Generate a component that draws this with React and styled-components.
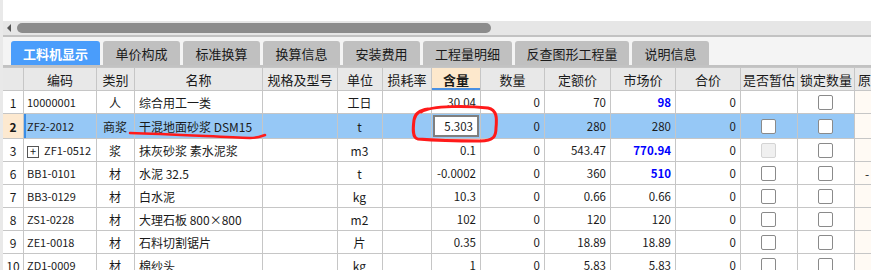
import React from "react"
import styled, { createGlobalStyle } from "styled-components"

const GlobalStyle = createGlobalStyle`
  html, body {
    margin: 0;
    padding: 0;
    background: #ffffff;
    overflow: hidden;
  }
  body {
    font-family: "Noto Sans CJK SC", "Noto Sans", sans-serif;
    color: #1a1a1a;
  }
`

//  styled-components
const Page = styled.div`
  position: relative;
  width: 871px;
  height: 270px;
  overflow: hidden;
  border-left: 3px solid #e9e9e9;
  box-sizing: border-box;
  background: #ffffff;
`

const Blank = styled.div`
  height: 21px;
`

const ScrollTrack = styled.div`
  display: flex;
  align-items: center;
  height: 14px;
  background: #e6e6e6;
  border-bottom: 2px solid #c2c2c2;
  padding-left: 4px;
  gap: 6px;
`

const Arrow = styled.div`
  width: 0;
  height: 0;
  border-top: 4px solid transparent;
  border-bottom: 4px solid transparent;
  border-right: 4px solid #555555;
`

const Thumb = styled.div`
  width: 474px;
  height: 10px;
  border-radius: 5px;
  background: #8c8c8c;
`

const TabBar = styled.div`
  display: flex;
  gap: 3px;
  height: 30px;
  padding: 6px 0 0 8px;
  box-sizing: border-box;
  background: #f4f4f4;
  border-bottom: 2px solid #c2c2c2;
  align-items: flex-end;
`

const Tab = styled.div`
  width: ${props => props.$w}px;
  height: 24px;
  display: flex;
  align-items: center;
  justify-content: center;
  border-radius: 3px 3px 0 0;
  font-size: 13px;
  background: ${props => (props.$active ? "#4a9dfb" : "#c0c0c0")};
  color: ${props => (props.$active ? "#ffffff" : "#1a1a1a")};
  font-weight: ${props => (props.$active ? "bold" : "normal")};
`

const Grid = styled.table`
  border-collapse: collapse;
  table-layout: fixed;
  width: 892px;
  margin-left: -1px;
`

const Head = styled.th`
  height: 22px;
  padding: 0;
  border: 1px solid #c6c6c6;
  background: ${props => (props.$active ? "#fde8cc" : "#e8e8e8")};
  font-size: 13px;
  font-weight: ${props => (props.$active ? "bold" : "normal")};
  text-align: ${props => props.$align || "center"};
  padding-left: ${props => (props.$align === "left" ? "3px" : "0")};
  white-space: nowrap;
  overflow: hidden;
  box-shadow: ${props => (props.$active ? "inset 0 -2px 0 #4a90e2" : "none")};
`

const Row = styled.tr`
  background: ${props => (props.$selected ? "#96c8f6" : "#ffffff")};
`

const Cell = styled.td`
  height: 22px;
  padding: 0 ${props => props.$pr || 4}px 0 ${props => props.$pl || 3}px;
  border: 1px solid #c6c6c6;
  font-size: ${props => (props.$num ? "11.5px" : "12px")};
  text-align: ${props => props.$align || "left"};
  white-space: nowrap;
  overflow: hidden;
  color: ${props => (props.$blue ? "#0000ff" : "#1a1a1a")};
  font-weight: ${props => (props.$blue ? "bold" : "normal")};
`

const NumCell = styled(Cell)`
  text-align: center;
  padding: 0;
  background: ${props => (props.$selected ? "#fde9d0" : "transparent")};
  font-weight: ${props => (props.$selected ? "bold" : "normal")};
  font-size: 12px;
`

const CodeCell = styled(Cell)`
  font-size: 11px;
  box-shadow: ${props => (props.$selected ? "inset 2px 0 0 #3a8ee6" : "none")};
`

const TailCell = styled(Cell)`
  background: #fffaf4;
  padding-left: 10px;
`

const EditCell = styled(Cell)`
  padding: 1px;
`

const EditBox = styled.div`
  height: 18px;
  border: 2px solid #7f7f7f;
  background: #ffffff;
  text-align: right;
  padding-right: 4px;
  line-height: 18px;
`

const Check = styled.div`
  width: 13px;
  height: 13px;
  margin: 0 auto;
  border-radius: 2px;
  border: 1px solid ${props => (props.$disabled ? "#d4d4d4" : "#8a8a8a")};
  background: ${props => (props.$disabled ? "#f0f0f0" : "#ffffff")};
`

const Expander = styled.span`
  display: inline-flex;
  align-items: center;
  justify-content: center;
  width: 10px;
  height: 10px;
  border: 1px solid #555555;
  font-size: 11px;
  line-height: 1;
  margin-right: 5px;
  vertical-align: -1px;
`

const Marks = styled.svg`
  position: absolute;
  left: -3px;
  top: 0;
  pointer-events: none;
`

const tabs = [
  ["工料机显示", 89, true],
  ["单价构成", 77],
  ["标准换算", 77],
  ["换算信息", 77],
  ["安装费用", 77],
  ["工程量明细", 89],
  ["反查图形工程量", 114],
  ["说明信息", 77],
]

const cols = [21, 73, 38, 128, 75, 45, 49, 49, 64, 66, 65, 65, 57, 57, 40]
const heads = ["", "编码", "类别", "名称", "规格及型号", "单位", "损耗率", "含量", "数量", "定额价", "市场价", "合价", "是否暂估", "锁定数量", "原"]

const rows = [
  { no: "1", code: "10000001", type: "人", name: "综合用工一类", unit: "工日", qty: "30.04", price: "70", market: "98", blue: true, est: null, lock: "on" },
  { no: "2", code: "ZF2-2012", type: "商浆", name: "干混地面砂浆 DSM15", unit: "t", qty: "5.303", price: "280", market: "280", est: "on", lock: "on", selected: true },
  { no: "3", code: "ZF1-0512", type: "浆", name: "抹灰砂浆 素水泥浆", unit: "m3", qty: "0.1", price: "543.47", market: "770.94", blue: true, est: "off", lock: "on", tree: true },
  { no: "6", code: "BB1-0101", type: "材", name: "水泥 32.5", unit: "t", qty: "-0.0002", price: "360", market: "510", blue: true, est: "on", lock: "on", tail: "-" },
  { no: "7", code: "BB3-0129", type: "材", name: "白水泥", unit: "kg", qty: "10.3", price: "0.66", market: "0.66", est: "on", lock: "on" },
  { no: "8", code: "ZS1-0228", type: "材", name: "大理石板 800×800", unit: "m2", qty: "102", price: "120", market: "120", est: "on", lock: "on" },
  { no: "9", code: "ZE1-0018", type: "材", name: "石料切割锯片", unit: "片", qty: "0.35", price: "18.89", market: "18.89", est: "on", lock: "on" },
  { no: "10", code: "ZD1-0009", type: "材", name: "棉纱头", unit: "kg", qty: "1", price: "5.83", market: "5.83", est: "on", lock: "on" },
]

const Box = ({ state }) => {
  if (!state) return null
  return <Check $disabled={state === "off"} />
}

const App = () => {
  return (
    <Page>
      <GlobalStyle />
      <Blank />
      <ScrollTrack>
        <Arrow />
        <Thumb />
      </ScrollTrack>
      <TabBar>
        {tabs.map(([label, w, active]) => (
          <Tab key={label} $w={w} $active={active}>
            {label}
          </Tab>
        ))}
      </TabBar>
      <Grid>
        <colgroup>
          {cols.map((w, i) => (
            <col key={i} style={{ width: w }} />
          ))}
        </colgroup>
        <thead>
          <tr>
            {heads.map((h, i) => (
              <Head key={i} $active={h === "含量"} $align={i === 14 ? "left" : "center"}>
                {h}
              </Head>
            ))}
          </tr>
        </thead>
        <tbody>
          {rows.map(r => (
            <Row key={r.no} $selected={r.selected}>
              <NumCell $selected={r.selected}>{r.no}</NumCell>
              <CodeCell $selected={r.selected}>
                {r.tree && <Expander>+</Expander>}
                {r.code}
              </CodeCell>
              <Cell $align="center">{r.type}</Cell>
              <Cell $pl={4}>{r.name}</Cell>
              <Cell />
              <Cell $align="center">{r.unit}</Cell>
              <Cell />
              {r.selected ? (
                <EditCell $num>
                  <EditBox>{r.qty}</EditBox>
                </EditCell>
              ) : (
                <Cell $num $align="right">{r.qty}</Cell>
              )}
              <Cell $num $align="right">0</Cell>
              <Cell $num $align="right">{r.price}</Cell>
              <Cell $num $align="right" $blue={r.blue}>
                {r.market}
              </Cell>
              <Cell $num $align="right">0</Cell>
              <Cell $align="center">
                <Box state={r.est} />
              </Cell>
              <Cell $align="center">
                <Box state={r.lock} />
              </Cell>
              <TailCell>{r.tail}</TailCell>
            </Row>
          ))}
        </tbody>
      </Grid>
      <Marks width="871" height="270" viewBox="0 0 871 270">
        <path
          d="M421 112 C432 105 470 106 488 108 C497 110 497 118 496 128 C496 136 494 141 480 141 C460 141 430 140 418 139 C412 138 413 128 414 120 C415 113 420 110 428 109"
          fill="none"
          stroke="#ff1a1a"
          strokeWidth="3"
          strokeLinecap="round"
        />
        <path
          d="M130 133 C170 134 220 137 250 138 C258 138 262 136 265 135"
          fill="none"
          stroke="#ff1a1a"
          strokeWidth="2.5"
          strokeLinecap="round"
        />
      </Marks>
    </Page>
  )
}

export default App
